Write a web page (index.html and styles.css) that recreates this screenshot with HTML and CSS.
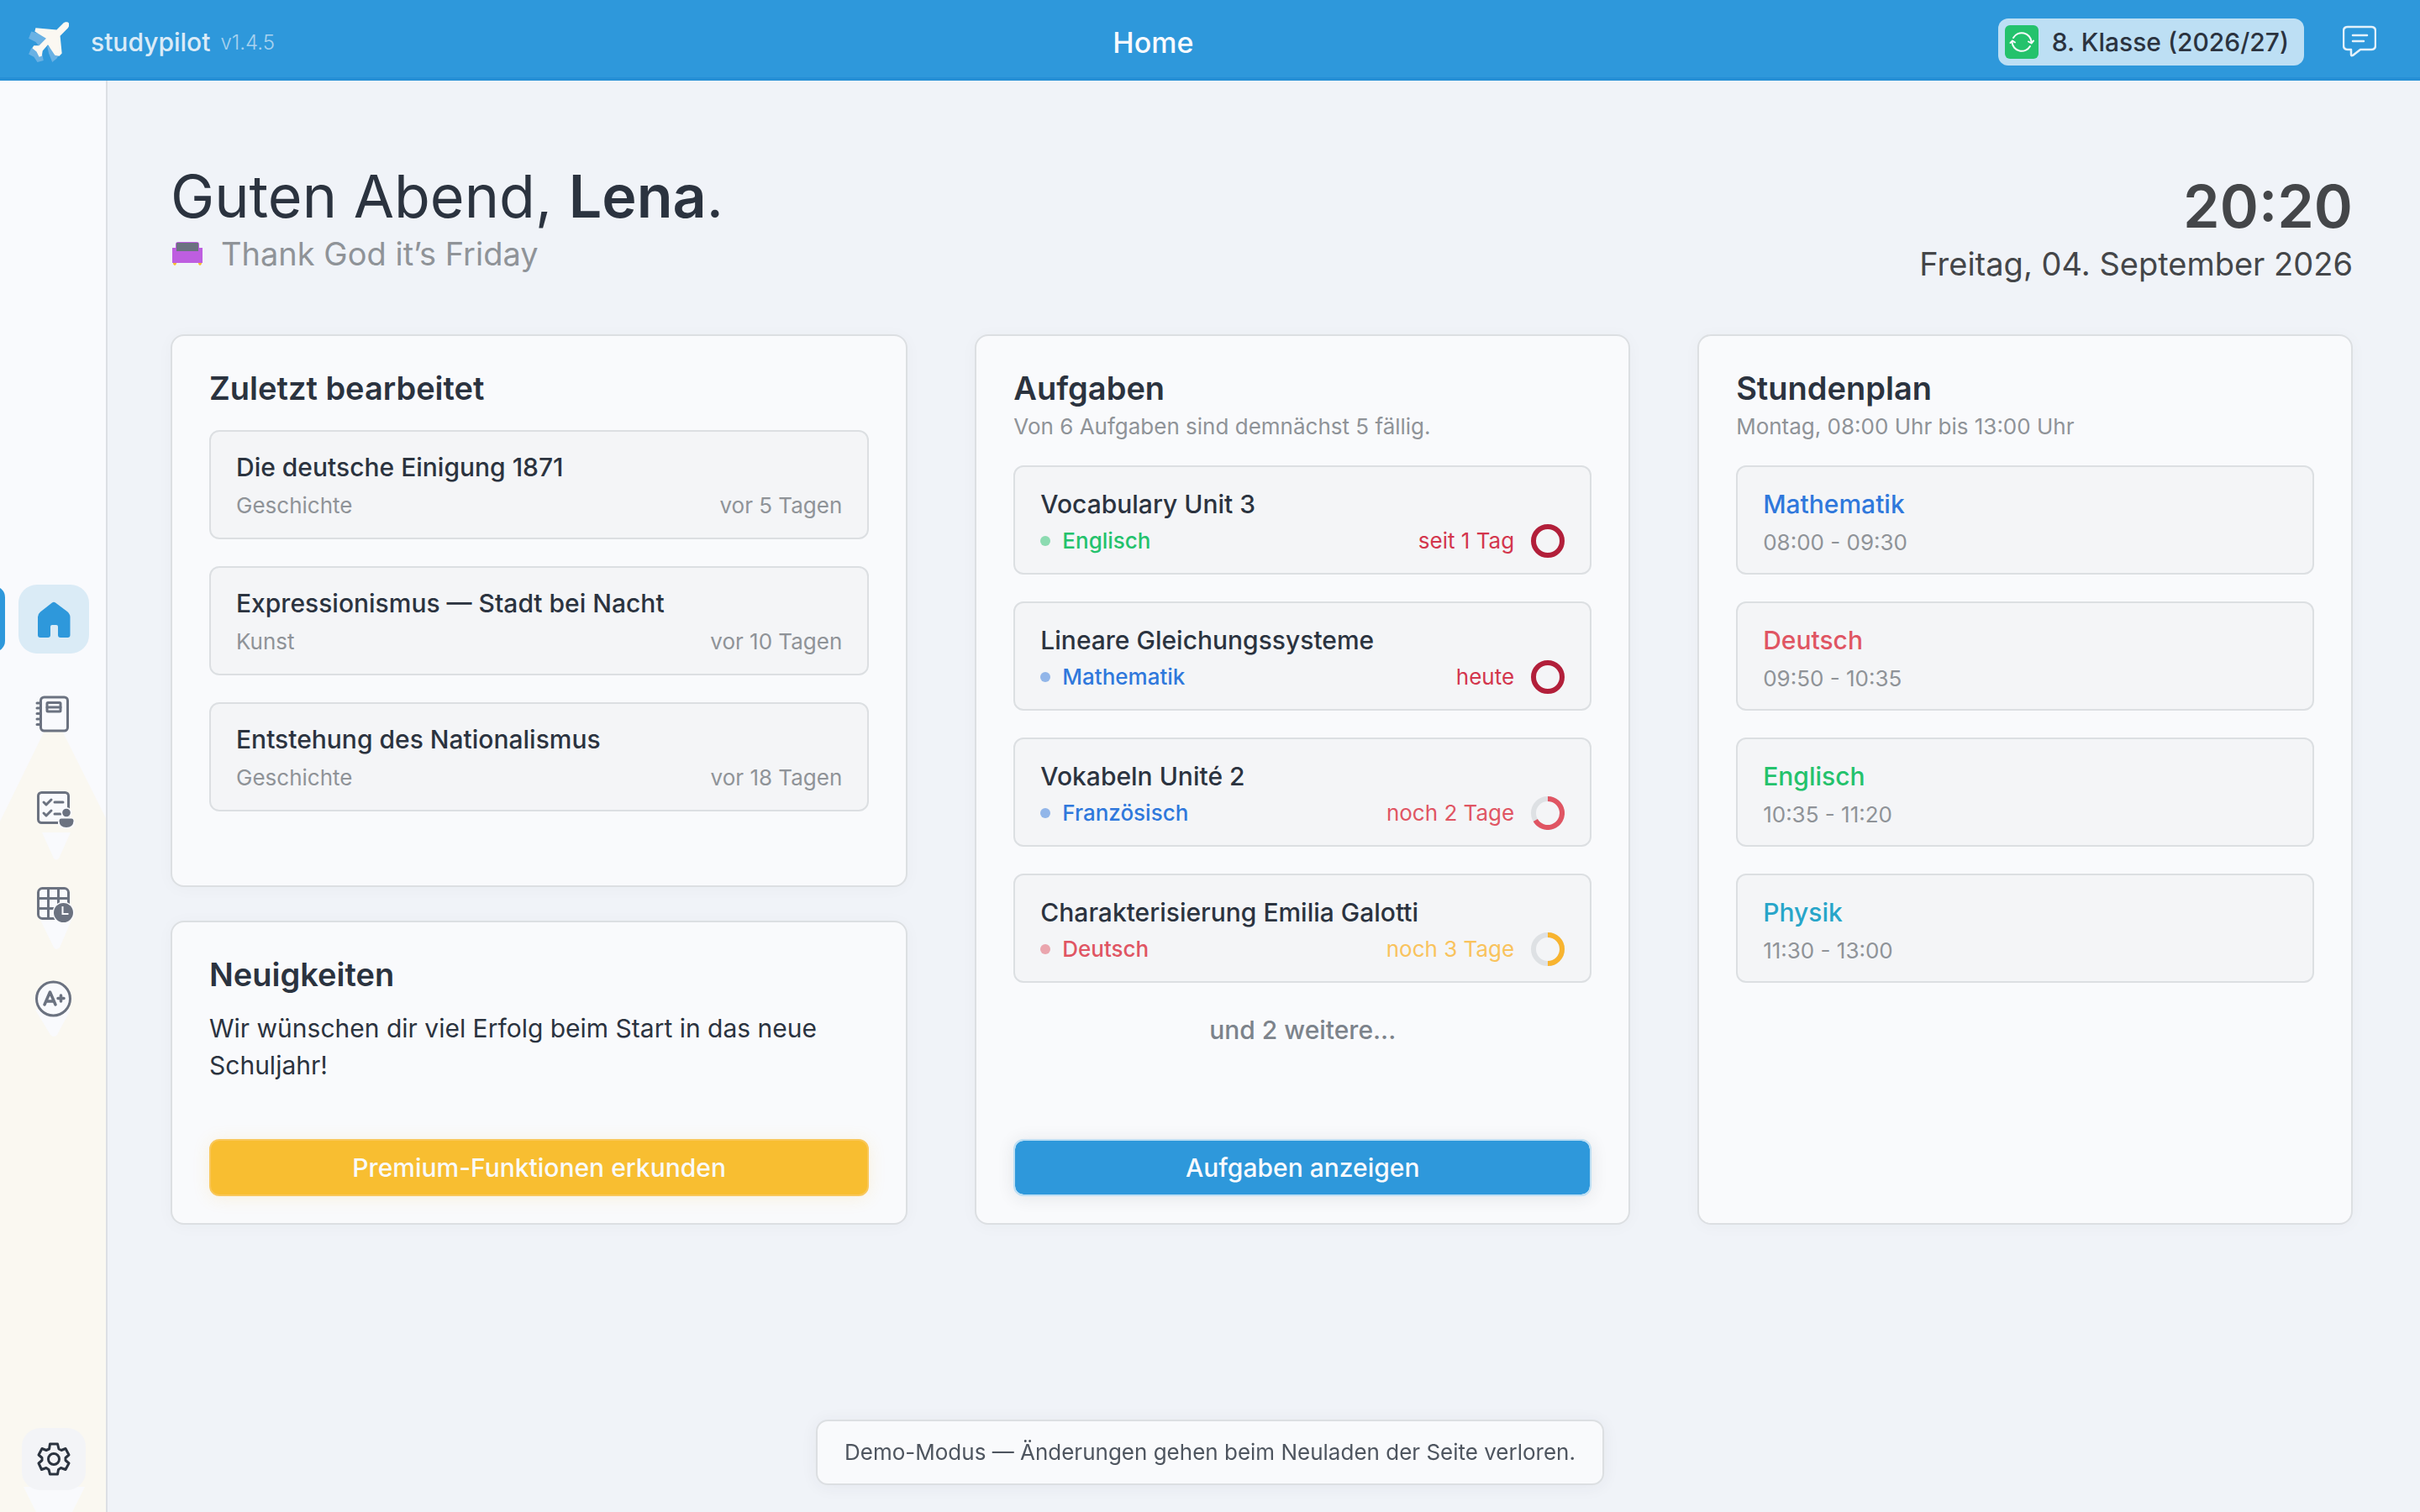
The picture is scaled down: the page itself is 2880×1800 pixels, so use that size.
FILE: index.html
```html
<!DOCTYPE html>
<html lang="de">

<head>
  <meta charset="utf-8">
  <title>studypilot</title>
  <link rel="stylesheet" href="styles.css">
</head>

<body>

  <header class="topbar">
    <a class="brand" href="#">
      <svg class="brand-logo" viewBox="0 0 48 48">
        <path fill="#69b1e4" d="M5 12l19 5-9 13-5-6-8-4zM5 31l12 4 2 10-7 2-4-6-6-3zM23 28l14 10-3 5-5 4-4-10z" />
        <path fill="#fbf8f2" d="M10 8l24 2 7-7c3-3 9-2 7 3l-1 2-9 9 2 20-3 3-5-1-8-12-6 7-1 6-3 1-3-6-5-4 2-3 6 0 8-8-13-8z" />
      </svg>
      <span class="brand-name">studypilot</span>
      <span class="brand-version">v1.4.5</span>
    </a>

    <h1 class="page-title">Home</h1>

    <div class="topbar-actions">
      <button class="class-switch" type="button">
        <span class="class-icon">
          <svg viewBox="0 0 40 40">
            <path d="M10 15a11.5 11.5 0 0 1 21.500 5M30 25a11.500 11.500 0 0 1-21.500-5M28 19.500l3.500 2 2.500-3M6.500 21l2.500-2.500 3 2" />
          </svg>
        </span>
        8. Klasse (2026/27)
      </button>
      <button class="feedback" type="button" aria-label="Feedback">
        <svg viewBox="0 0 40 40">
          <path d="M6 2h28q5 0 5 5v17q0 5-5 5H21l-9 7q-2 1-2-1v-6H6q-5 0-5-5V7q0-5 5-5zM12 12h17M12 19h13" />
        </svg>
      </button>
    </div>
  </header>

  <div class="layout">

    <aside class="sidebar">
      <!-- warm light cone behind the icons -->
      <svg class="sidebar-glow" width="126" height="1704">
        <path fill="#faf8f1" d="M53 774h21l52 104v826H0V882z" />
        <path fill="#f9fafd" d="M50 895h34l-14 31q-3 3-6 0zM45 993l42 2-16 37q-4 4-7 0zM42 1106h42l-16 30q-4 4-8 0zM28 1674h73l-15 30H43z" />
      </svg>

      <nav class="menu">
        <a class="menu-link active" href="#" aria-label="Home">
          <svg viewBox="0 0 44 44">
            <path fill="currentColor" d="M20 2.500q2-1.500 4 0l14 10.500q3.500 3 3.500 6.500V41q0 3-3 3H30q-3 0-3-3V31q0-2-2-2h-5q-2 0-2 2v10q0 3-3 3H6q-3 0-3-3V19.500q0-3.500 3-6z" />
          </svg>
        </a>
        <a class="menu-link" href="#" aria-label="Hefte">
          <svg viewBox="0 0 44 44">
            <g fill="none" stroke="currentColor" stroke-width="3" stroke-linecap="round">
              <rect x="6.500" y="2" width="32" height="40" rx="4" />
              <rect x="14" y="8.500" width="16" height="10.500" rx="1" />
              <path d="M14 14h16M2 9h4M2 15h4M2 21.500h4M2 28h4M2 34.500h4" />
            </g>
          </svg>
        </a>
        <a class="menu-link" href="#" aria-label="Aufgaben">
          <svg viewBox="0 0 44 44">
            <rect x="3.500" y="2.500" width="36" height="36" rx="4" fill="#f9fafd" stroke="currentColor" stroke-width="3" />
            <path fill="none" stroke="currentColor" stroke-width="3" stroke-linecap="round" stroke-linejoin="round" d="M10 14l3 3 6-6M23 14h10M10 27l3 3 6-6M23 28h7" />
            <circle cx="37" cy="26.500" r="6.500" fill="#f9fafd" />
            <rect x="27" y="32" width="20" height="13" rx="6" fill="#f9fafd" />
            <circle cx="37" cy="26.500" r="4.800" fill="currentColor" />
            <path fill="currentColor" d="M31 33.500h12q2.500 0 2.500 3-.5 7.500-8.500 7.500t-8.500-7.500q0-3 2.500-3z" />
          </svg>
        </a>
        <a class="menu-link" href="#" aria-label="Stundenplan">
          <svg viewBox="0 0 44 44">
            <g stroke="currentColor" stroke-width="3">
              <rect x="3.500" y="3.500" width="36" height="36" rx="5" fill="#f9fafd" />
              <path d="M15.500 3v37M27.500 3v37M3 15.500h37M3 27.500h37" />
            </g>
            <circle cx="33.500" cy="32.500" r="13" fill="#f9fafd" />
            <circle cx="33.500" cy="32.500" r="11.500" fill="currentColor" />
            <path fill="none" stroke="#f9fafd" stroke-width="2" d="M32.500 25v9h7" />
          </svg>
        </a>
        <a class="menu-link" href="#" aria-label="Noten">
          <svg viewBox="0 0 44 44">
            <circle cx="21.500" cy="22" r="20" fill="#f9fafd" stroke="currentColor" stroke-width="3" />
            <path fill="none" stroke="currentColor" stroke-width="3.500" stroke-linecap="round" stroke-linejoin="round" d="M11 29l6.500-15L24 29M13.500 25h8M27 21.500h7M30.500 18v7" />
          </svg>
        </a>
      </nav>

      <a class="settings" href="#" aria-label="Einstellungen">
        <svg viewBox="0 0 40 40">
          <path d="M15.500 2h9l1.500 6 3 1.500 5-2 4 7.500-4 3.500v3l4 3.500-4 7.500-5.500-2-3 2-1 5.500h-9l-1.500-5.500-3-2-5.500 2L2 25l4-3.500v-3L2 15l4-7.500 5 2L14.500 8z" />
          <circle cx="20" cy="20" r="6.500" />
        </svg>
      </a>
    </aside>

    <main class="content">

      <section class="welcome">
        <div class="greeting">
          <h2 class="greeting-title">Guten Abend, <b>Lena</b>.</h2>
          <p class="greeting-sub">
            <svg viewBox="0 0 36 28">
              <path fill="#f8bd31" d="M1 24h4v2q-2 4-4 0zM31 24h4v2q-2 4-4 0z" />
              <path fill="#be5ee0" d="M0 7h4V3q0-3 3-3h22q3 0 3 3v4h4v18H0z" />
              <rect x="5" y="1" width="26" height="10" fill="#6b7280" />
            </svg>
            Thank God it’s Friday
          </p>
        </div>
        <div class="clock">
          <time class="clock-time">20:20</time>
          <p class="clock-date">Freitag, 04. September 2026</p>
        </div>
      </section>

      <div class="board">

        <div class="column">
          <section class="card recent">
            <h3 class="card-title">Zuletzt bearbeitet</h3>
            <ul class="list">
              <li class="item">
                <h4>Die deutsche Einigung 1871</h4>
                <p class="meta"><span>Geschichte</span><span>vor 5 Tagen</span></p>
              </li>
              <li class="item">
                <h4>Expressionismus — Stadt bei Nacht</h4>
                <p class="meta"><span>Kunst</span><span>vor 10 Tagen</span></p>
              </li>
              <li class="item">
                <h4>Entstehung des Nationalismus</h4>
                <p class="meta"><span>Geschichte</span><span>vor 18 Tagen</span></p>
              </li>
            </ul>
          </section>

          <section class="card news">
            <h3 class="card-title">Neuigkeiten</h3>
            <p class="news-text">Wir wünschen dir viel Erfolg beim Start in das neue Schuljahr!</p>
            <button class="btn btn-premium" type="button">Premium-Funktionen erkunden</button>
          </section>
        </div>

        <section class="card tasks">
          <h3 class="card-title">Aufgaben</h3>
          <p class="card-sub">Von 6 Aufgaben sind demnächst 5 fällig.</p>
          <ul class="list">
            <li class="item">
              <h4>Vocabulary Unit 3</h4>
              <div class="meta">
                <span class="subject green">Englisch</span>
                <span class="due crimson">seit 1 Tag</span>
                <svg class="ring" viewBox="0 0 40 40"><circle cx="20" cy="20" r="17" stroke="#b21f3a" /></svg>
              </div>
            </li>
            <li class="item">
              <h4>Lineare Gleichungssysteme</h4>
              <div class="meta">
                <span class="subject blue">Mathematik</span>
                <span class="due crimson">heute</span>
                <svg class="ring" viewBox="0 0 40 40"><circle cx="20" cy="20" r="17" stroke="#b21f3a" /></svg>
              </div>
            </li>
            <li class="item">
              <h4>Vokabeln Unité 2</h4>
              <div class="meta">
                <span class="subject blue">Französisch</span>
                <span class="due red">noch 2 Tage</span>
                <svg class="ring" viewBox="0 0 40 40">
                  <circle cx="20" cy="20" r="17" stroke="#dee1e4" />
                  <path d="M20 3a17 17 0 1 1-14.700 25.500" stroke="#e05563" />
                </svg>
              </div>
            </li>
            <li class="item">
              <h4>Charakterisierung Emilia Galotti</h4>
              <div class="meta">
                <span class="subject red">Deutsch</span>
                <span class="due yellow">noch 3 Tage</span>
                <svg class="ring" viewBox="0 0 40 40">
                  <circle cx="20" cy="20" r="17" stroke="#dee1e4" />
                  <path d="M20 3a17 17 0 0 1 0 34" stroke="#f8b42f" />
                </svg>
              </div>
            </li>
          </ul>
          <p class="more">und 2 weitere...</p>
          <button class="btn btn-primary" type="button">Aufgaben anzeigen</button>
        </section>

        <section class="card">
          <h3 class="card-title">Stundenplan</h3>
          <p class="card-sub">Montag, 08:00 Uhr bis 13:00 Uhr</p>
          <ul class="list">
            <li class="item">
              <h4 class="blue">Mathematik</h4>
              <p class="meta">08:00 - 09:30</p>
            </li>
            <li class="item">
              <h4 class="red">Deutsch</h4>
              <p class="meta">09:50 - 10:35</p>
            </li>
            <li class="item">
              <h4 class="green">Englisch</h4>
              <p class="meta">10:35 - 11:20</p>
            </li>
            <li class="item">
              <h4 class="cyan">Physik</h4>
              <p class="meta">11:30 - 13:00</p>
            </li>
          </ul>
        </section>

      </div>
    </main>
  </div>

  <div class="toast">Demo-Modus — Änderungen gehen beim Neuladen der Seite verloren.</div>

</body>

</html>
```
FILE: styles.css
```css
* {
  box-sizing: border-box;
  margin: 0;
  padding: 0;
}

body {
  min-height: 100vh;
  display: flex;
  flex-direction: column;
  background-color: #f0f3f8;
  color: #2b333f;
  font-family: Inter, "Liberation Sans", sans-serif;
  font-size: 30px;
}

a {
  color: inherit;
  text-decoration: none;
}

button {
  border: none;
  font: inherit;
  font-weight: 500;
  cursor: pointer;
}

ul {
  list-style: none;
}

svg {
  display: block;
  flex-shrink: 0;
}

/* top bar */

.topbar {
  height: 96px;
  display: flex;
  align-items: center;
  justify-content: space-between;
  padding: 8px 52px 0 32px;
  background-color: #2e98db;
  border-bottom: 4px solid #268fd5;
  color: #f9fafd;
}

.brand {
  display: flex;
  align-items: center;
  padding-right: 40px;
}

.brand-logo {
  width: 50px;
  height: 50px;
}

.brand-name {
  margin-left: 26px;
  font-weight: 500;
  opacity: 0.85;
}

.brand-version {
  margin-left: 12px;
  font-size: 24px;
  font-weight: 300;
  opacity: 0.6;
}

.page-title {
  font-size: 34px;
  font-weight: 500;
}

.topbar-actions {
  display: flex;
  align-items: center;
  gap: 46px;
}

.class-switch {
  height: 56px;
  display: flex;
  align-items: center;
  gap: 16px;
  padding: 0 18px 0 8px;
  border-radius: 12px;
  background-color: #bddff4;
  color: #2b333f;
}

.class-icon {
  width: 40px;
  height: 40px;
  border-radius: 6px;
  background-color: #24c26c;
}

.class-icon path {
  fill: none;
  stroke: #f9fafd;
  stroke-width: 2;
  stroke-linecap: round;
  stroke-linejoin: round;
}

.feedback {
  background: none;
}

.feedback svg {
  width: 40px;
  height: 40px;
}

.feedback path {
  fill: none;
  stroke: #e4f1fa;
  stroke-width: 2.500;
  stroke-linecap: round;
  stroke-linejoin: round;
}

/* side bar */

.layout {
  flex: 1;
  display: flex;
}

.sidebar {
  position: relative;
  width: 128px;
  display: flex;
  flex-direction: column;
  align-items: center;
  justify-content: space-between;
  padding: 600px 0 26px 2px;
  border-right: 2px solid #dcdfe4;
  background-color: #f9fafd;
  overflow: hidden;
}

.sidebar-glow {
  position: absolute;
  top: 0;
  left: 0;
}

.menu {
  position: relative;
  display: flex;
  flex-direction: column;
  gap: 31px;
}

.menu-link {
  width: 84px;
  height: 82px;
  display: flex;
  align-items: center;
  justify-content: center;
  border-radius: 22px;
  color: #6b7280;
}

.menu-link svg {
  width: 44px;
  height: 44px;
  overflow: visible;
}

.menu-link.active {
  background-color: #daebf6;
  color: #2e98db;
}

/* marker at the window edge */
.menu-link.active::before {
  content: "";
  position: absolute;
  left: -42px;
  width: 26px;
  height: 78px;
  border-radius: 22px;
  background-color: #2e98db;
}

.settings {
  position: relative;
  width: 76px;
  height: 74px;
  display: flex;
  align-items: center;
  justify-content: center;
  border-radius: 22px;
  background-color: #f3f4f7;
}

.settings svg {
  width: 40px;
  height: 40px;
  fill: none;
  stroke: #2b333f;
  stroke-width: 3;
  stroke-linejoin: round;
}

/* content */

.content {
  flex: 1;
  padding: 94px 80px 0 75px;
}

.welcome {
  display: flex;
  justify-content: space-between;
  margin-bottom: 60px;
}

.greeting {
  padding-bottom: 12px;
}

.greeting-title {
  font-size: 70px;
  line-height: 88px;
  font-weight: 400;
}

.greeting-title b {
  font-weight: 600;
}

.greeting-sub {
  display: flex;
  align-items: center;
  gap: 22px;
  padding-left: 2px;
  color: #8f9398;
  font-size: 38px;
  line-height: 48px;
}

.greeting-sub svg {
  width: 36px;
  height: 28px;
}

.clock {
  padding-top: 12px;
  color: #444649;
  text-align: right;
}

.clock-time {
  display: block;
  font-size: 70px;
  line-height: 88px;
  font-weight: 600;
}

.clock-date {
  font-size: 38px;
  line-height: 48px;
}

.board {
  display: grid;
  grid-template-columns: 9fr 8fr 8fr;
  gap: 80px;
}

.column {
  display: flex;
  flex-direction: column;
  gap: 40px;
}

.card {
  display: flex;
  flex-direction: column;
  padding: 38px 44px 32px;
  border: 2px solid #dcdfe2;
  border-radius: 16px;
  background-color: #f9fafc;
  box-shadow: 0 2px 20px rgba(43, 51, 63, 0.03);
}

.card-title {
  font-size: 38px;
  line-height: 48px;
  font-weight: 600;
}

.card-sub {
  margin-top: 4px;
  color: #8f9398;
  font-size: 26px;
  line-height: 36px;
}

.list {
  display: flex;
  flex-direction: column;
  gap: 32px;
  margin-top: 28px;
}

.recent {
  padding-bottom: 88px;
}

.recent .list {
  margin-top: 26px;
}

.item {
  height: 130px;
  padding: 24px 30px 0;
  border: 2px solid #dcdfe2;
  border-radius: 12px;
  background-color: #f4f5f7;
}

.item h4 {
  font-size: 30px;
  line-height: 40px;
  font-weight: 500;
}

.recent .item {
  padding-top: 22px;
}

.meta {
  display: flex;
  align-items: center;
  justify-content: space-between;
  margin-top: 6px;
  color: #8f9398;
  font-size: 26px;
  line-height: 40px;
}

.tasks .meta {
  margin-top: 4px;
}

.subject {
  display: flex;
  align-items: center;
  gap: 14px;
  font-weight: 500;
}

.subject::before {
  content: "";
  width: 12px;
  height: 12px;
  border-radius: 50%;
  background-color: currentColor;
  opacity: 0.5;
}

.due {
  margin-left: auto;
  margin-right: 20px;
}

.ring {
  width: 40px;
  height: 40px;
  fill: none;
  stroke-width: 6;
}

.green { color: #24c26c; }
.blue { color: #2f78dc; }
.red { color: #e05563; }
.cyan { color: #27a5c9; }
.crimson { color: #d3364d; }
.yellow { color: #f9c35c; }

.more {
  margin-top: 36px;
  color: #7c838b;
  font-weight: 500;
  line-height: 40px;
  text-align: center;
}

.news-text {
  margin: 18px 0 66px;
  line-height: 44px;
}

.btn {
  height: 68px;
  margin-top: auto;
  border-radius: 12px;
  color: #f9fafd;
}

.btn-premium {
  border: 2px solid #f9c75a;
  background-color: #f8be31;
  box-shadow: 0 2px 20px rgba(248, 190, 49, 0.15);
}

.btn-primary {
  border: 2px solid #bddff4;
  background-color: #2e98db;
  background-clip: padding-box;
  box-shadow: 0 2px 20px rgba(43, 51, 63, 0.1);
}

.toast {
  position: fixed;
  left: 50%;
  bottom: 32px;
  transform: translateX(-50%);
  padding: 18px 32px;
  border: 2px solid #dcdfe2;
  border-radius: 14px;
  background-color: #f9fafc;
  box-shadow: 0 2px 20px rgba(43, 51, 63, 0.06);
  color: #4e555f;
  font-size: 26px;
  line-height: 38px;
  white-space: nowrap;
}
```
